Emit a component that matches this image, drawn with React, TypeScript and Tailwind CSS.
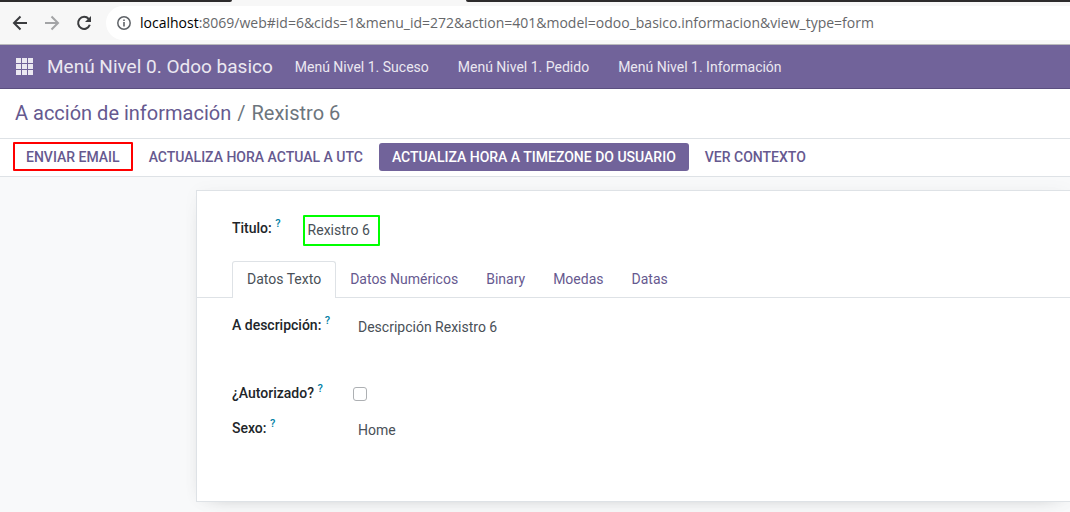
import { useState } from "react";

const menus = ["Menú Nivel 1. Suceso", "Menú Nivel 1. Pedido", "Menú Nivel 1. Información"];
const tabs = ["Datos Texto", "Datos Numéricos", "Binary", "Moedas", "Datas"];

function BrowserBar() {
  return (
    <div className="bg-[#f7f7f7]">
      <div className="flex h-[2px]">
        <div className="w-[232px] rounded-br-[3px] bg-[#2d2b2c]" />
        <div className="w-[234px]" />
        <div className="flex-1 rounded-bl-[3px] bg-[#2d2b2c]" />
      </div>
      <div className="flex h-[43px] items-center border-b border-[#b9b9bb] pl-3">
        <button type="button" aria-label="Back" className="text-[#3b3c3f]">
          <svg width="16" height="16" viewBox="0 0 16 16" fill="none" stroke="currentColor" strokeWidth="2">
            <path d="M15 8H2.5M8.5 1.5 2 8l6.5 6.5" />
          </svg>
        </button>
        <button type="button" aria-label="Forward" className="ml-4 text-[#a3a4a6]">
          <svg width="16" height="16" viewBox="0 0 16 16" fill="none" stroke="currentColor" strokeWidth="2">
            <path d="M1 8h12.500M7.500 1.500 14 8l-6.500 6.500" />
          </svg>
        </button>
        <button type="button" aria-label="Reload" className="ml-4 text-[#3b3c3f]">
          <svg width="16" height="16" viewBox="0 0 16 16">
            <path d="M12.700 4A6 6 0 1 0 13.800 9.800" fill="none" stroke="currentColor" strokeWidth="2" />
            <path d="M15 1v6H9z" fill="currentColor" />
          </svg>
        </button>
        <div className="ml-[14px] flex h-[34px] flex-1 items-center rounded-l-full bg-white pl-[11px]">
          <svg width="14" height="14" viewBox="0 0 14 14" className="text-[#5f6368]">
            <circle cx="7" cy="7" r="6.200" fill="none" stroke="currentColor" strokeWidth="1.500" />
            <path d="M7 6v4.500M7 3.500v1.500" stroke="currentColor" strokeWidth="1.600" />
          </svg>
          <div role="textbox" aria-label="Address" className="ml-[9px] font-['Open_Sans',sans-serif] text-[14px] whitespace-nowrap text-[#66676a]">
            <span className="text-black">localhost</span>:8069/web#id=6&amp;cids=1&amp;menu_id=272&amp;action=401&amp;model=odoo_basico.informacion&amp;view_type=form
          </div>
        </div>
      </div>
    </div>
  );
}

function Navbar() {
  return (
    <nav className="flex h-11 items-center border-b border-[#5b4f80] bg-[#71639a] px-4 text-[#ebe8f1]">
      <button type="button" aria-label="Apps">
        <svg width="17" height="17" viewBox="0 0 17 17" fill="currentColor">
          {[0, 6, 12].map((y) => [0, 6, 12].map((x) => <rect key={`${x}-${y}`} x={x} y={y} width="5" height="5" />))}
        </svg>
      </button>
      <a href="#home" className="ml-[14px] text-[19px]">Menú Nivel 0. Odoo basico</a>
      <div className="ml-[22px] flex gap-[29px]">
        {menus.map((menu) => (
          <a key={menu} href="#menu">{menu}</a>
        ))}
      </div>
    </nav>
  );
}

function FieldLabel({ id, text }: { id: string; text: string }) {
  return (
    <label htmlFor={id} className="font-medium text-[#212529]">
      {text} <sup className="-top-[6px] text-[11px] leading-none font-medium text-[#0180a5]">?</sup>
    </label>
  );
}

export default function App() {
  const [active, setActive] = useState(tabs[0]);
  const [allowed, setAllowed] = useState(false);
  return (
    <div className="min-h-screen overflow-hidden bg-[#f8f9fa] font-[Roboto,sans-serif] text-[14px] leading-5 text-[#495057]">
      <BrowserBar />
      <Navbar />
      <header className="border-b border-[#dee2e6] bg-white">
        <div className="flex h-[49px] items-center gap-[6px] px-[15px] pb-[2px] text-[20px] text-[#6c757d]">
          <a href="#list" className="text-[#66598f]">A acción de información</a>
          <span>/</span>
          <span>Rexistro 6</span>
        </div>
      </header>
      <div className="flex h-[38px] items-center gap-[3px] border-b border-[#dee2e6] bg-white pb-[2px] pl-[13px] font-medium whitespace-nowrap text-[#66598f]">
        <button type="button" className="h-[29px] rounded-[1px] border-2 border-[#f00] px-[11px]">ENVIAR EMAIL</button>
        <button type="button" className="h-7 px-[13px]">ACTUALIZA HORA ACTUAL A UTC</button>
        <button type="button" className="mt-px h-7 rounded-[3px] bg-[#71639a] px-[13px] pb-px text-white">ACTUALIZA HORA A TIMEZONE DO USUARIO</button>
        <button type="button" className="h-7 px-[13px]">VER CONTEXTO</button>
      </div>
      <main className="pt-[13px] pb-[10px] pl-[196px]">
        <section className="border border-r-0 border-[#dee2e6] bg-white pt-6 pb-[61px] shadow-[0_5px_20px_-15px_rgba(0,0,0,0.4),0_0_16px_rgba(0,0,0,0.03)]">
          <div className="flex items-start gap-[22px] pl-[35px]">
            <div className="pt-[3px]">
              <FieldLabel id="titulo" text="Titulo:" />
            </div>
            <output id="titulo" className="h-[31px] rounded-[1px] border-2 border-[#0f0] pt-[3px] pr-2 pl-[3px]">Rexistro 6</output>
          </div>
          <div role="tablist" className="mt-[15px] flex border-b border-[#dee2e6] pl-[35px]">
            {tabs.map((tab) => (
              <button
                key={tab}
                type="button"
                role="tab"
                aria-selected={active === tab}
                onClick={() => setActive(tab)}
                className={
                  active === tab
                    ? "-mb-px h-[37px] rounded-t-[3px] border border-b-0 border-[#dee2e6] bg-white px-[14px] pb-[2px] text-[#495057]"
                    : "h-9 px-[14px] text-[#66598f]"
                }
              >
                {tab}
              </button>
            ))}
          </div>
          <div className="grid grid-cols-[121px_1fr] pt-[17px] pl-[35px]">
            <FieldLabel id="descripcion" text="A descripción:" />
            <output id="descripcion" className="h-[68px] pt-[2px] pl-[5px]">Descripción Rexistro 6</output>
            <FieldLabel id="autorizado" text="¿Autorizado?" />
            <input
              id="autorizado"
              type="checkbox"
              checked={allowed}
              onChange={() => setAllowed(!allowed)}
              className="mt-1 mb-[17px] size-[14px] appearance-none rounded-[3px] border border-[#adb0b3] bg-white checked:bg-[#71639a]"
            />
            <FieldLabel id="sexo" text="Sexo:" />
            <output id="sexo" className="pt-[2px] pl-[5px]">Home</output>
          </div>
        </section>
      </main>
    </div>
  );
}
